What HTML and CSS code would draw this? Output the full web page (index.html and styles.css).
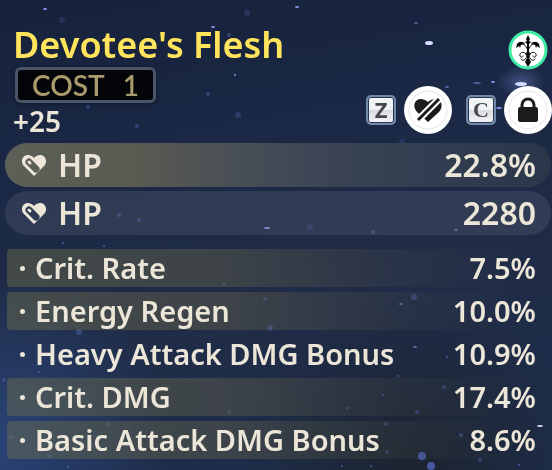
FILE: index.html
```html
<!DOCTYPE html>
<html lang="en">
	<head>
		<meta charset="UTF-8" />
		<meta name="viewport" content="width=device-width, initial-scale=1.0" />
		<title>Devotee's Flesh</title>
		<link rel="stylesheet" href="styles.css">
	</head>
	<body>
		<!-- starfield -->
		<svg class="stars" viewBox="0 0 552 470" preserveAspectRatio="xMidYMin slice" aria-hidden="true">
			<defs>
				<radialGradient id="glow">
					<stop offset="0" stop-color="#7c8be0" stop-opacity="0.4" />
					<stop offset="1" stop-color="#7c8be0" stop-opacity="0" />
				</radialGradient>
				<mask id="capsule">
					<rect width="26" height="22" fill="#fff" />
					<path d="M8 8l7 7" stroke="#000" stroke-width="7" stroke-linecap="round" />
					<path d="M8 8l1 1" stroke="#fff" stroke-width="3" stroke-linecap="round" />
				</mask>
				<symbol id="hp" viewBox="0 0 26 22">
					<path d="M13 22L2 11C-2 4 6-3 13 4C20-3 28 4 24 11z" fill="#ece6d8" mask="url(#capsule)" />
				</symbol>
			</defs>
			<ellipse cx="521" cy="82" rx="24" ry="16" fill="url(#glow)" />
			<g fill="#5367b8" opacity="0.45">
				<circle cx="62" cy="20" r="3" opacity="0.5" />
				<circle cx="247" cy="13" r="3" opacity="0.6" />
				<circle cx="229" cy="35" r="2" />
				<circle cx="208" cy="94" r="2" />
				<circle cx="238" cy="115" r="3" opacity="0.7" />
				<circle cx="137" cy="126" r="2" />
				<circle cx="88" cy="107" r="2" />
				<circle cx="198" cy="159" r="2" />
				<circle cx="219" cy="162" r="2" />
				<circle cx="74" cy="179" r="3" opacity="0.6" />
				<circle cx="139" cy="220" r="2" />
				<circle cx="119" cy="215" r="2" />
				<circle cx="310" cy="227" r="3" opacity="0.6" />
				<circle cx="373" cy="232" r="2" />
				<circle cx="402" cy="142" r="3" opacity="0.5" />
				<circle cx="224" cy="284" r="2" />
				<circle cx="79" cy="332" r="3" />
				<circle cx="265" cy="299" r="2" />
				<circle cx="270" cy="328" r="3" />
				<circle cx="414" cy="297" r="3" />
				<circle cx="4" cy="380" r="2" />
				<circle cx="229" cy="412" r="2" />
				<circle cx="107" cy="424" r="2" />
				<circle cx="49" cy="456" r="2" />
				<circle cx="11" cy="437" r="2" />
				<circle cx="444" cy="387" r="2" />
				<circle cx="417" cy="412" r="2" />
				<circle cx="386" cy="424" r="2" />
				<circle cx="461" cy="435" r="2" />
				<circle cx="480" cy="460" r="2" />
				<circle cx="387" cy="452" r="2" />
			</g>
			<g fill="#5367c0" opacity="0.8">
				<circle cx="422" cy="456" r="4" />
				<circle cx="431" cy="466" r="4" />
				<circle cx="398" cy="376" r="1" />
				<circle cx="383" cy="395" r="1" />
				<circle cx="347" cy="408" r="1" />
				<circle cx="447" cy="357" r="1" />
				<circle cx="342" cy="466" r="1" />
				<circle cx="371" cy="466" r="1" />
				<circle cx="519" cy="465" r="1" />
				<circle cx="63" cy="243" r="1" />
				<circle cx="104" cy="246" r="1" />
				<circle cx="39" cy="372" r="1" />
				<circle cx="68" cy="467" r="1" />
			</g>
			<g fill="#8298ef">
				<ellipse cx="45" cy="9" rx="2" ry="1" />
				<ellipse cx="297" cy="7" rx="2" ry="1" />
				<ellipse cx="213" cy="27" rx="2" ry="1" />
				<circle cx="235" cy="75" r="1" />
				<ellipse cx="416" cy="23" rx="2" ry="1" opacity="0.5" />
				<ellipse cx="477" cy="83" rx="4" ry="1" opacity="0.5" />
				<ellipse cx="493" cy="82" rx="2" ry="1" />
				<ellipse cx="447" cy="87" rx="2" ry="1" opacity="0.6" />
				<ellipse cx="499" cy="108" rx="3" ry="1" />
				<ellipse cx="354" cy="186" rx="2" ry="1" opacity="0.7" />
				<ellipse cx="267" cy="228" rx="3" ry="1" />
				<ellipse cx="456" cy="230" rx="2" ry="1" opacity="0.6" />
				<ellipse cx="401" cy="304" rx="2" ry="1" opacity="0.6" />
				<ellipse cx="415" cy="347" rx="2" ry="1" opacity="0.6" />
			</g>
			<g fill="#d5deff">
				<ellipse cx="429" cy="43" rx="4" ry="2" />
				<ellipse cx="521" cy="84" rx="6" ry="2" />
				<ellipse cx="540" cy="426" rx="3" ry="1" />
			</g>
		</svg>

		<main class="echo">
			<header class="echo-header">
				<div class="echo-info">
					<h1>Devotee's Flesh</h1>
					<div class="cost"><span>COST</span><span>1</span></div>
					<div class="level">+25</div>
				</div>
				<div class="echo-side">
					<svg class="sonata" viewBox="0 0 40 40" role="img" aria-label="Sonata effect">
						<circle cx="20" cy="20" r="18" fill="#fff" stroke="#40eaa5" stroke-width="3" />
						<path d="M20 5l2 4-1 2 2 1-2 2 0 8 2 2-2 1 1 2-1 1 2 4-3 5-3-5 2-4-1-1 1-2-2-1 2-2 0-8-2-2 2-1-1-2z" fill="#080808" />
						<path d="M20 21C18 15 14 11 10 14M20 21c2-6 6-10 10-7M19 26c-2-6-8-4-7 0 1 2 3 1 3 0M21 26c2-6 8-4 7 0-1 2-3 1-3 0M18 28c-1 3-4 3-5 1M22 28c1 3 4 3 5 1" fill="none" stroke="#080808" stroke-width="1" stroke-linecap="round" />
						<path d="M17 14c-2-3-6-3-8 0l-1 4 3-2 1 2 1-3zM23 14c2-3 6-3 8 0l1 4-3-2-1 2-1-3z" fill="#080808" />
					</svg>
					<div class="actions">
						<kbd class="key-z">Z</kbd>
						<button class="round-btn" type="button" aria-label="Discard">
							<svg viewBox="0 0 48 48">
								<circle class="ring" cx="24" cy="24" r="19" />
								<path d="M24 36L13 26C6 18 14 8 24 16c10-8 18 2 11 10z" fill="#1c1c1c" />
								<path d="M14 34L35 13" stroke="#fff" stroke-width="7" />
								<path d="M14 34L35 13" stroke="#1c1c1c" stroke-width="3" />
							</svg>
						</button>
						<kbd class="key-c">C</kbd>
						<button class="round-btn" type="button" aria-label="Lock">
							<svg viewBox="0 0 48 48">
								<circle class="ring" cx="24" cy="24" r="19" />
								<rect x="14" y="21" width="20" height="15" rx="2" fill="#1c1c1c" />
								<path d="M18 22v-3a6 6 0 0 1 12 0v3" fill="none" stroke="#1c1c1c" stroke-width="3" />
							</svg>
						</button>
					</div>
				</div>
			</header>

			<dl class="main-stats">
				<div class="main-stat highlight">
					<dt><svg class="heart" aria-hidden="true"><use href="#hp" /></svg>HP</dt>
					<dd>22.8%</dd>
				</div>
				<div class="main-stat">
					<dt><svg class="heart" aria-hidden="true"><use href="#hp" /></svg>HP</dt>
					<dd>2280</dd>
				</div>
			</dl>

			<dl class="sub-stats">
				<div class="sub-stat highlight"><dt>Crit. Rate</dt><dd>7.5%</dd></div>
				<div class="sub-stat highlight"><dt>Energy Regen</dt><dd>10.0%</dd></div>
				<div class="sub-stat"><dt>Heavy Attack DMG Bonus</dt><dd>10.9%</dd></div>
				<div class="sub-stat highlight"><dt>Crit. DMG</dt><dd>17.4%</dd></div>
				<div class="sub-stat highlight"><dt>Basic Attack DMG Bonus</dt><dd>8.6%</dd></div>
			</dl>
		</main>
	</body>
</html>
```
FILE: styles.css
```css
* {
	box-sizing: border-box;
}
body {
	margin: 0;
	min-height: 100vh;
	position: relative;
	overflow-x: hidden;
	font-family: "Noto Sans", sans-serif;
	font-weight: 600;
	color: #ece6d8;
	background:
		radial-gradient(circle at 0% 94%, rgba(48, 82, 148, 0.6), transparent 24%),
		radial-gradient(circle at 75% 100%, rgba(27, 35, 44, 0.9), transparent 28%),
		linear-gradient(170deg, #172139 0%, #1a2845 28%, #202c47 60%, #1e2d4b 100%);
}
h1,
dl,
dd {
	margin: 0;
}
.stars {
	position: absolute;
	inset: 0;
	width: 100%;
	height: 100%;
}
.echo {
	position: relative;
}
.echo-header {
	display: flex;
	justify-content: space-between;
	padding: 22px 0 4px 13px;
}
h1 {
	font-size: 36px;
	line-height: 45px;
	font-weight: 600;
	color: #ffe45c;
	white-space: nowrap;
}
.cost {
	display: flex;
	justify-content: space-between;
	width: 141px;
	margin-left: 2px;
	padding: 0 14px;
	border: 3px solid #4b5569;
	border-radius: 6px;
	background: #040509;
	color: #aa9b6d;
	font-family: Lato, sans-serif;
	font-size: 28px;
	line-height: 30px;
	box-shadow: 0 1px 4px rgba(0, 0, 0, 0.4);
}
.level {
	font-size: 28px;
	line-height: 36px;
}
.echo-side {
	display: flex;
	flex-direction: column;
	align-items: flex-end;
	gap: 16px;
	padding-top: 8px;
}
.sonata {
	width: 40px;
	height: 40px;
	margin-right: 4px;
}
.actions {
	display: flex;
	align-items: center;
}
kbd {
	width: 30px;
	height: 30px;
	border: 2px solid #7389aa;
	border-radius: 5px;
	background: linear-gradient(#f1f3f6 50%, #d8dbe1 50%, #f4f5f8);
	box-shadow: inset 0 0 0 1px #263551;
	color: #45474b;
	font-size: 22px;
	line-height: 25px;
	font-weight: 700;
	text-align: center;
}
.key-z {
	font-family: "Noto Sans", sans-serif;
}
.key-c {
	font-family: "Liberation Serif", serif;
}
.round-btn {
	width: 48px;
	height: 48px;
	margin: 0 14px 0 8px;
	padding: 0;
	border: 0;
	border-radius: 50%;
	background: #fff;
	cursor: pointer;
}
.round-btn:last-child {
	margin-right: 0;
}
.round-btn svg {
	display: block;
}
.ring {
	fill: none;
	stroke: #e6e6e6;
}
.main-stats {
	display: grid;
	gap: 4px;
	padding: 0 1px 0 5px;
}
.main-stat {
	display: flex;
	justify-content: space-between;
	align-items: center;
	height: 44px;
	padding: 0 15px 0 16px;
	border-radius: 22px;
	background: rgba(120, 125, 135, 0.22);
	font-size: 32px;
	line-height: 44px;
}
.main-stat.highlight {
	background: linear-gradient(90deg, #5c6057 0%, #5a5a51 24%, #454d56 45%, #374154 65%, #2b364a 100%);
}
.main-stat dt {
	display: flex;
	align-items: center;
	gap: 11px;
}
.heart {
	width: 26px;
	height: 22px;
}
.sub-stats {
	display: grid;
	gap: 5px;
	padding: 14px 1px 10px 7px;
}
.sub-stat {
	display: flex;
	justify-content: space-between;
	height: 38px;
	padding: 0 15px 0 13px;
	border-radius: 4px;
	font-size: 29px;
	line-height: 38px;
}
.sub-stat.highlight {
	background: linear-gradient(90deg, rgba(116, 115, 75, 0.44), rgba(102, 100, 75, 0.42) 40%, rgba(80, 80, 75, 0.2) 72%, transparent 95%);
}
.sub-stat dt {
	display: flex;
	align-items: center;
	gap: 10px;
	white-space: nowrap;
}
.sub-stat dt::before {
	content: "";
	width: 5px;
	height: 5px;
	border-radius: 50%;
	background: #ece6d8;
}
```
